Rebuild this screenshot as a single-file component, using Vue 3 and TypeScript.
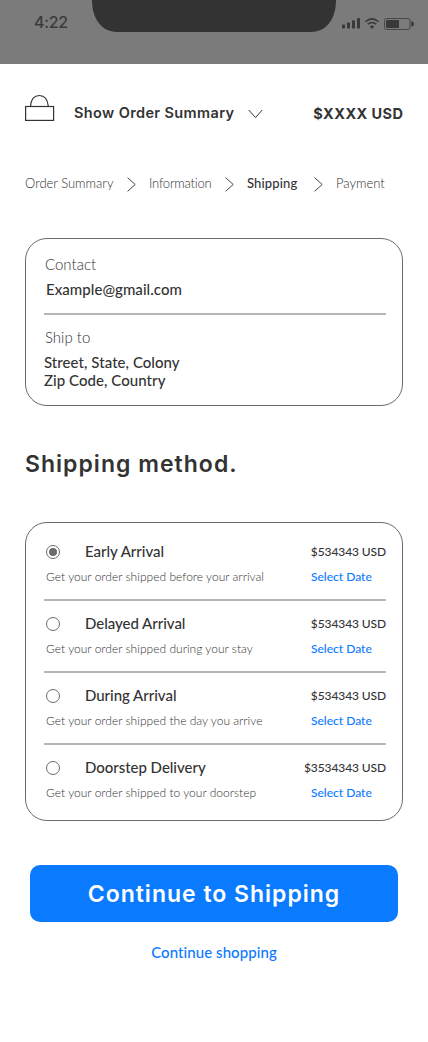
<script setup lang="ts">
import { ref } from 'vue'

interface ShippingOption {
  id: string
  name: string
  price: string
  note: string
}

const steps = ['Order Summary', 'Information', 'Shipping', 'Payment']
const currentStep = 'Shipping'

const options: ShippingOption[] = [
  { id: 'early', name: 'Early Arrival', price: '$534343 USD', note: 'Get your order shipped before your arrival' },
  { id: 'delayed', name: 'Delayed Arrival', price: '$534343 USD', note: 'Get your order shipped during your stay' },
  { id: 'during', name: 'During Arrival', price: '$534343 USD', note: 'Get your order shipped the day you arrive' },
  { id: 'doorstep', name: 'Doorstep Delivery', price: '$3534343 USD', note: 'Get your order shipped to your doorstep' },
]

const selected = ref('early')
</script>

<template>
  <div class="screen">
    <header class="status">
      <span class="time">4:22</span>
      <svg class="notch" width="244" height="32" viewBox="0 0 244 32">
        <path d="M0 0H244C244 18 235 32 219 32H25C9 32 0 18 0 0Z" fill="#333" />
      </svg>
      <svg class="indicators" width="73" height="14" viewBox="0 0 73 14">
        <g fill="#393939">
          <rect x="0" y="7.500" width="3" height="4" rx="0.8" />
          <rect x="5" y="5.500" width="3" height="6" rx="0.8" />
          <rect x="10" y="3.300" width="3" height="8.200" rx="0.8" />
          <rect x="15" y="1" width="3" height="10.500" rx="0.8" />
          <path d="M27.800 9.500Q30 7.700 32.200 9.500L30 11.900Z" />
          <rect x="44" y="3" width="13" height="8" rx="0.8" />
          <path d="M69.300 4.300C73 4.800 73 9.200 69.300 9.700Z" />
        </g>
        <g fill="none" stroke="#393939">
          <path d="M23.400 4.700Q30 -1 36.600 4.700M25.700 7.300Q30 3.600 34.300 7.300" stroke-width="1.500" />
          <rect x="42.500" y="1.500" width="25.500" height="11" rx="2" stroke-width="0.8" />
        </g>
      </svg>
    </header>

    <section class="summary">
      <svg class="bag" width="30" height="28" viewBox="0 0 30 28" fill="none" stroke="#333">
        <rect x="0.600" y="12.500" width="28" height="13.900" stroke-width="1.200" />
        <path d="M5.500 12.500C6 5.500 9.500 1.500 14.400 1.500S22.600 5.500 23.400 12.500" stroke-width="1.200" />
      </svg>
      <span class="summary-title">Show Order Summary</span>
      <svg class="caret" width="15" height="10" viewBox="0 0 15 10" fill="none" stroke="#333">
        <path d="M.8 1L7.500 8.600L14.200 1" />
      </svg>
      <span class="total">$XXXX USD</span>
    </section>

    <nav class="steps">
      <template v-for="(step, i) in steps" :key="step">
        <svg v-if="i > 0" class="sep" width="9" height="15" viewBox="0 0 9 15" fill="none" stroke="#444">
          <path d="M.6 .7L8.200 7.500L.6 14.300" />
        </svg>
        <span class="step" :class="[`step-${i}`, { current: step === currentStep }]">{{ step }}</span>
      </template>
    </nav>

    <section class="card contact">
      <p class="label">Contact</p>
      <p class="value email">Example@gmail.com</p>
      <hr />
      <p class="label">Ship to</p>
      <p class="value address">Street, State, Colony<br />Zip Code, Country</p>
    </section>

    <h1>Shipping method.</h1>

    <section class="card methods">
      <div v-for="o in options" :key="o.id" class="option" @click="selected = o.id">
        <div class="line">
          <span class="radio" :class="{ on: selected === o.id }"></span>
          <span class="name">{{ o.name }}</span>
          <span class="price">{{ o.price }}</span>
        </div>
        <div class="line details">
          <span class="note">{{ o.note }}</span>
          <a class="date">Select Date</a>
        </div>
      </div>
    </section>

    <button class="primary" type="button">Continue to Shipping</button>
    <a class="shopping">Continue shopping</a>
  </div>
</template>

<style>
body {
  background: #fff;
}
</style>

<style scoped>
.screen {
  width: 428px;
  height: 1042px;
  box-sizing: border-box;
  overflow: hidden;
  display: flex;
  flex-direction: column;
  background: #fff;
  color: #333;
  font-family: Lato, "Liberation Sans", sans-serif;
  white-space: nowrap;
}
.status {
  height: 64px;
  flex: none;
  display: flex;
  align-items: flex-start;
  background: #7b7b7b;
}
.time {
  width: 58px;
  padding: 12px 0 0 34px;
  font: 500 16px/20px Inter, sans-serif;
  letter-spacing: -0.3px;
  color: #3b3b3b;
}
.notch {
  flex: none;
}
.indicators {
  flex: none;
  margin: 17px 0 0 6px;
}
.summary {
  display: flex;
  height: 28px;
  margin: 30px 25px 0;
  font-family: Inter, sans-serif;
}
.bag {
  flex: none;
}
.summary-title {
  width: 160px;
  margin-left: 19px;
  padding-top: 9px;
  font-size: 14.5px;
  line-height: 20px;
  font-weight: 600;
  letter-spacing: 0.38px;
}
.caret {
  margin: 15px 0 0 14px;
}
.total {
  margin-left: auto;
  padding-top: 10px;
  font-size: 14.5px;
  line-height: 20px;
  font-weight: 700;
  letter-spacing: 0.43px;
  margin-right: -0.4px;
}
.steps {
  display: flex;
  align-items: center;
  height: 20px;
  margin: 52px 0 0 25px;
  font-size: 13px;
  line-height: 20px;
  font-weight: 300;
}
.step {
  margin-top: -2px;
}
.step-0 {
  width: 89px;
}
.step-1 {
  width: 63px;
  letter-spacing: -0.22px;
}
.step-2 {
  width: 51px;
  letter-spacing: 0.15px;
}
.step.current {
  font-weight: 500;
}
.sep {
  margin: 1px 13px 0;
}
.sep:nth-of-type(3) {
  margin-left: 16px;
}
.card {
  box-sizing: border-box;
  width: 378px;
  margin-left: 25px;
  border: 1px solid #6b6b6b;
  border-radius: 22px;
  padding: 0 16px 0 18px;
}
.contact {
  height: 168px;
  margin-top: 44px;
  padding-top: 15px;
}
p {
  margin: 0;
}
.label {
  padding-left: 1px;
  font-size: 15px;
  line-height: 20px;
  font-weight: 300;
}
.value {
  font-size: 15px;
  line-height: 18px;
  font-weight: 500;
  letter-spacing: 0.05px;
}
.email {
  margin-top: 6px;
  padding-left: 2px;
}
hr {
  height: 2px;
  margin: 15px 0 12px;
  border: 0;
  background: #b5b5b5;
}
.address {
  margin-top: 6px;
}
h1 {
  margin: 43px 0 0 25px;
  font: 600 23px/30px Inter, sans-serif;
  letter-spacing: 1.02px;
}
.methods {
  height: 299px;
  margin-top: 43px;
  padding-top: 4px;
}
.option {
  box-sizing: border-box;
  height: 72px;
  padding-top: 14px;
}
.option + .option {
  border-top: 2px solid #b5b5b5;
  padding-top: 12px;
}
.line {
  display: flex;
  align-items: center;
  height: 20px;
  padding-left: 2px;
}
.radio {
  display: flex;
  box-sizing: border-box;
  width: 14px;
  height: 14px;
  margin: 1px 25px 0 0;
  border: 1px solid #6b6b6b;
  border-radius: 50%;
}
.radio.on::after {
  content: "";
  width: 8px;
  height: 8px;
  margin: auto;
  border-radius: 50%;
  background: #6b6b6b;
}
.name {
  margin-top: -1px;
  font-size: 15px;
  line-height: 20px;
  font-weight: 500;
  letter-spacing: -0.03px;
}
.price {
  margin: 2px 0 0 auto;
  font-size: 12px;
  line-height: 20px;
  font-weight: 500;
  letter-spacing: -0.1px;
}
.details {
  margin-top: 6px;
}
.note {
  width: 265px;
  font-size: 12px;
  line-height: 20px;
  font-weight: 300;
  letter-spacing: 0.02px;
}
.date {
  font-size: 12px;
  line-height: 20px;
  font-weight: 500;
  color: #0a7aff;
}
.primary {
  width: 368px;
  height: 57px;
  flex: none;
  margin: 44px 0 0 30px;
  padding: 2px 0 0;
  border: 0;
  border-radius: 10px;
  background: #0a7aff;
  color: #fff;
  font: 600 23px/55px Inter, sans-serif;
  letter-spacing: 0.99px;
}
.shopping {
  margin-top: 20px;
  text-align: center;
  font-size: 15px;
  line-height: 20px;
  font-weight: 500;
  letter-spacing: 0.07px;
  color: #0a7aff;
}
</style>
